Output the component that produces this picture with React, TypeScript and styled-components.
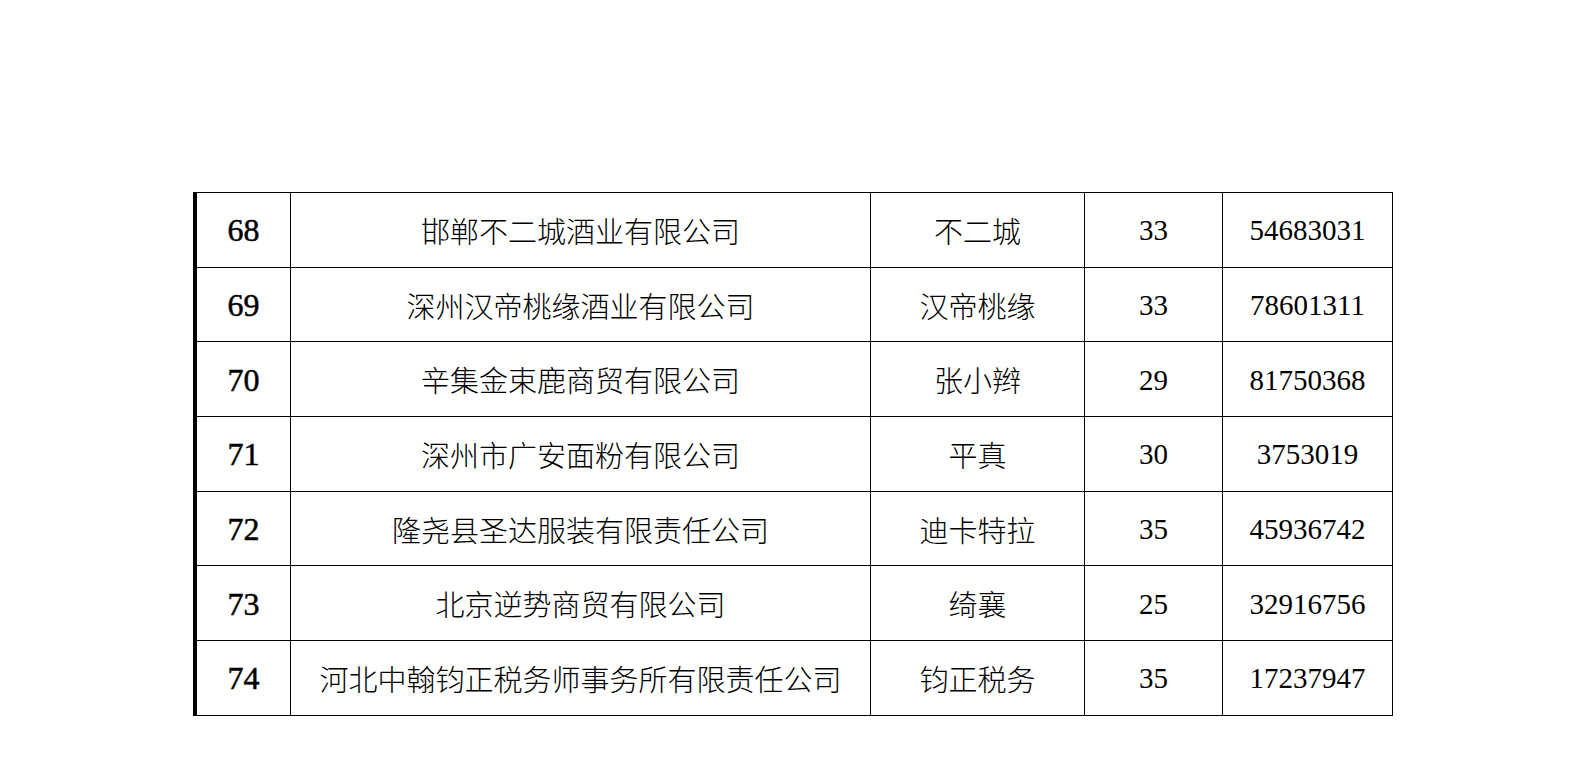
import React from "react";
import styled, { createGlobalStyle } from "styled-components";

interface IRecord {
  no: number;
  company: string;
  brand: string;
  count: number;
  code: string;
}

const records: IRecord[] = [
  { no: 68, company: "邯郸不二城酒业有限公司", brand: "不二城", count: 33, code: "54683031" },
  { no: 69, company: "深州汉帝桃缘酒业有限公司", brand: "汉帝桃缘", count: 33, code: "78601311" },
  { no: 70, company: "辛集金束鹿商贸有限公司", brand: "张小辫", count: 29, code: "81750368" },
  { no: 71, company: "深州市广安面粉有限公司", brand: "平真", count: 30, code: "3753019" },
  { no: 72, company: "隆尧县圣达服装有限责任公司", brand: "迪卡特拉", count: 35, code: "45936742" },
  { no: 73, company: "北京逆势商贸有限公司", brand: "绮襄", count: 25, code: "32916756" },
  { no: 74, company: "河北中翰钧正税务师事务所有限责任公司", brand: "钧正税务", count: 35, code: "17237947" },
];

const GlobalStyle = createGlobalStyle`
  html, body {
    margin: 0;
    padding: 0;
    background: #ffffff;
  }
`;

const Page = styled.div`
  width: 1587px;
  height: 783px;
  box-sizing: border-box;
  padding: 192px 0 0 193px;
  background: #ffffff;
`;

const Sheet = styled.div`
  display: grid;
  grid-template-columns: 94px 580px 214px 138px 170px;
  grid-auto-rows: 74.7px;
  width: max-content;
  border-top: 1px solid #000;
  border-left: 4px solid #000;
`;

type CellKind = "index" | "text" | "number";

const Cell = styled.div<{ $kind: CellKind }>`
  display: flex;
  align-items: center;
  justify-content: center;
  box-sizing: border-box;
  border-right: 1px solid #000;
  border-bottom: 1px solid #000;
  color: #000;
  white-space: nowrap;
  font-family: ${(p) =>
    p.$kind === "text"
      ? '"Noto Sans CJK SC", "Noto Sans", sans-serif'
      : '"Liberation Serif", "Times New Roman", serif'};
  font-size: ${(p) => (p.$kind === "index" ? "32px" : "29px")};
  font-weight: ${(p) => (p.$kind === "text" ? 300 : 400)};
  -webkit-text-stroke: ${(p) => (p.$kind === "index" ? "0.5px #000" : "0")};
  padding-top: ${(p) => (p.$kind === "text" ? "0" : "2px")};
`;

const App = () => (
  <>
    <GlobalStyle />
    <Page>
      <Sheet>
        {records.map((r) => (
          <React.Fragment key={r.no}>
            <Cell $kind="index">{r.no}</Cell>
            <Cell $kind="text">{r.company}</Cell>
            <Cell $kind="text">{r.brand}</Cell>
            <Cell $kind="number">{r.count}</Cell>
            <Cell $kind="number">{r.code}</Cell>
          </React.Fragment>
        ))}
      </Sheet>
    </Page>
  </>
);

export default App;
